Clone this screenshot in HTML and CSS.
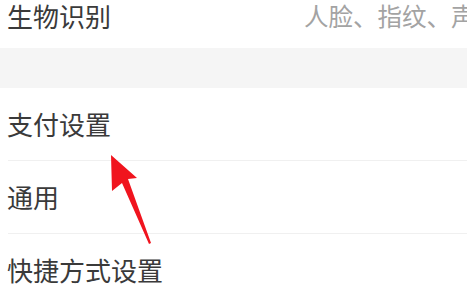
FILE: index.html
```html
<!DOCTYPE html>
<html lang="zh-CN">
<head>
    <meta charset="UTF-8">
    <meta name="viewport" content="width=device-width, initial-scale=1.0">
    <title>设置</title>
    <link rel="stylesheet" href="styles.css">
</head>
<body>

    <div class="page">
        <div class="item first">
            <span class="label">生物识别</span>
            <span class="value">人脸、指纹、声纹</span>
        </div>

        <div class="gap"></div>

        <div class="group">
            <div class="item">
                <span class="label">支付设置</span>
            </div>
            <div class="item">
                <span class="label">通用</span>
            </div>
            <div class="item">
                <span class="label">快捷方式设置</span>
            </div>
        </div>

        <!-- annotation arrow pointing at 支付设置 -->
        <svg class="pointer" width="60" height="100" viewBox="0 0 60 100">
            <polygon points="1,0 27,23 18,24 41,88 39,89 12,28 2,36" fill="#f0141e"/>
        </svg>
    </div>

</body>
</html>
```

FILE: styles.css
```css
body {
    font-family: "Noto Sans CJK SC", "Noto Sans", sans-serif;
    background-color: #fff;
    margin: 0;
    padding: 0;
    overflow: hidden;
}

.page {
    position: relative;
    width: 100%;
    height: 299px;
    overflow: hidden;
}

.item {
    display: flex;
    align-items: center;
    height: 72px;
    padding-left: 7px;
    box-sizing: border-box;
}

.item.first {
    height: 48px;
    align-items: flex-start;
}

.label {
    flex: 0 0 297px;
    font-size: 26px;
    line-height: 32px;
    color: #3a3a3a;
    white-space: nowrap;
}

.value {
    flex-shrink: 0;
    font-size: 24.5px;
    line-height: 32px;
    color: #a3a3a3;
    white-space: nowrap;
}

.gap {
    height: 40px;
    background-color: #f5f5f5;
}

.group .item + .item {
    border-top: 1px solid #f0f0f0;
    height: 73px;
    margin-left: 8px;
    padding-left: 0;
}

.group .item + .item .label {
    margin-left: -1px;
}

.pointer {
    position: absolute;
    left: 110px;
    top: 155px;
}
```
